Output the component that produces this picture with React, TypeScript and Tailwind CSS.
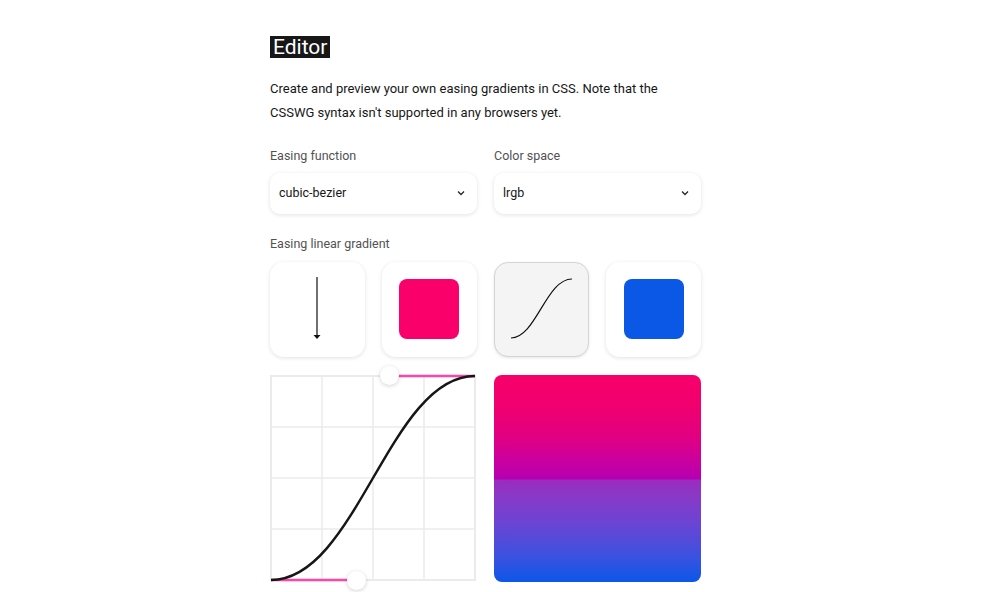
import React from "react";

const font = { fontFamily: "Roboto, 'Noto Sans', sans-serif" };

function Chevron() {
  return (
    <svg width="10" height="10" viewBox="0 0 10 10" fill="none" className="text-neutral-800">
      <path d="M2 3.5 L5 6.5 L8 3.5" stroke="currentColor" strokeWidth="1.3" />
    </svg>
  );
}

function Select({ value }: { value: string }) {
  return (
    <div className="h-[41px] bg-white rounded-[10px] shadow-[0_1px_4px_rgba(0,0,0,0.12)] flex items-center justify-between pl-[9px] pr-[11px] text-[12.5px] text-neutral-900">
      <span>{value}</span>
      <Chevron />
    </div>
  );
}

export default function App() {
  const w = 206;
  const curve = `M0 ${w} C ${0.42 * w} ${w} ${0.58 * w} 0 ${w} 0`;
  const grid = [w / 4, w / 2, (3 * w) / 4];

  return (
    <div className="min-h-screen bg-white text-neutral-900" style={font}>
      <div className="ml-[270px] w-[431px] pt-[36px]">
        <h1 className="inline-block bg-neutral-900 text-white text-[21px] leading-[22px] px-[3px]">
          Editor
        </h1>
        <p className="mt-[16px] text-[13px] leading-[24px] text-neutral-900 w-[410px]">
          Create and preview your own easing gradients in CSS. Note that the CSSWG syntax isn't
          supported in any browsers yet.
        </p>

        <div className="grid grid-cols-2 gap-[17px] mt-[22px]">
          <div>
            <div className="text-[12.5px] text-neutral-600 mb-[7px]">Easing function</div>
            <Select value="cubic-bezier" />
          </div>
          <div>
            <div className="text-[12.5px] text-neutral-600 mb-[7px]">Color space</div>
            <Select value="lrgb" />
          </div>
        </div>

        <div className="text-[12.5px] text-neutral-600 mt-[21px] mb-[8px]">Easing linear gradient</div>
        <div className="grid grid-cols-4 gap-[17.5px]">
          <div className="h-[95px] rounded-[14px] bg-white shadow-[0_1px_4px_rgba(0,0,0,0.12)] flex items-center justify-center">
            <svg width="10" height="64" viewBox="0 0 10 64">
              <line x1="5" y1="0" x2="5" y2="59" stroke="#333" strokeWidth="1.4" />
              <path d="M1.5 58 L8.5 58 L5 62 Z" fill="#111" />
            </svg>
          </div>
          <div className="h-[95px] rounded-[14px] bg-white shadow-[0_1px_4px_rgba(0,0,0,0.12)] flex items-center justify-center">
            <div className="w-[60px] h-[60px] rounded-[8px] bg-[#f9006a]" />
          </div>
          <div className="h-[95px] rounded-[14px] bg-[#f4f4f4] border border-[#d4d4d4] shadow-[0_1px_3px_rgba(0,0,0,0.1)] flex items-center justify-center">
            <svg width="64" height="62" viewBox="0 0 64 62" fill="none">
              <path d="M1 60 C 26 60 36 1 62 1" stroke="#111" strokeWidth="1.2" />
            </svg>
          </div>
          <div className="h-[95px] rounded-[14px] bg-white shadow-[0_1px_4px_rgba(0,0,0,0.12)] flex items-center justify-center">
            <div className="w-[60px] h-[60px] rounded-[8px] bg-[#0b57e6]" />
          </div>
        </div>

        <div className="grid grid-cols-2 gap-[17px] mt-[18px]">
          <div className="relative w-[206px] h-[206px]">
            <svg width="206" height="206" viewBox="-1 -1 208 208" className="absolute inset-0 overflow-visible">
              <rect x="0" y="0" width={w} height={w} fill="white" stroke="#ebebeb" strokeWidth="2" />
              {grid.map((g) => (
                <g key={g}>
                  <line x1={g} y1="0" x2={g} y2={w} stroke="#ebebeb" strokeWidth="1.5" />
                  <line x1="0" y1={g} x2={w} y2={g} stroke="#ebebeb" strokeWidth="1.5" />
                </g>
              ))}
              <line x1="0" y1={w} x2={0.42 * w} y2={w} stroke="#ff45a6" strokeWidth="2.5" />
              <line x1={0.58 * w} y1="0" x2={w} y2="0" stroke="#ff45a6" strokeWidth="2.5" />
              <path d={curve} stroke="#161616" strokeWidth="2.5" fill="none" />
            </svg>
            <div className="absolute w-[19px] h-[19px] rounded-full bg-white shadow-[0_1px_4px_rgba(0,0,0,0.18)] left-[77px] top-[196px]" />
            <div className="absolute w-[19px] h-[19px] rounded-full bg-white shadow-[0_1px_4px_rgba(0,0,0,0.18)] left-[110px] top-[-9px]" />
          </div>
          <div className="h-[207px] rounded-[8px] bg-[linear-gradient(to_bottom,#f7006b_0%,#f1006f_15%,#e10081_30%,#c900a0_42%,#b400b0_50%,#9a2cc0_51%,#8a38c6_58%,#6a45d4_72%,#3a52e0_88%,#0b57e7_100%)]" />
        </div>
      </div>
    </div>
  );
}
